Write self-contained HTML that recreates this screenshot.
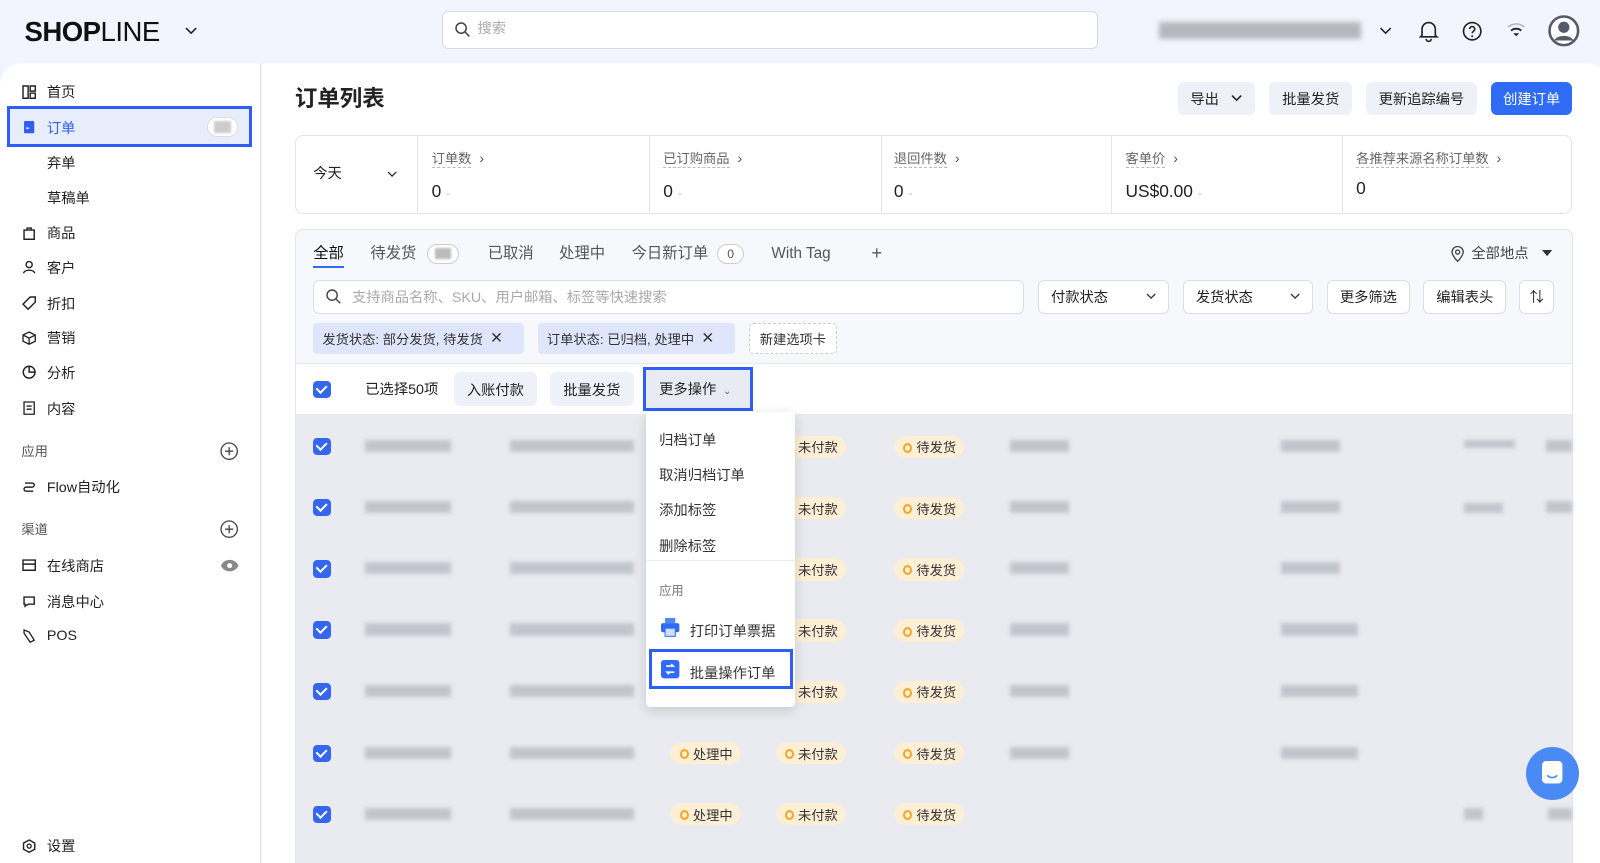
<!DOCTYPE html>
<html><head><meta charset="utf-8"><style>
*{box-sizing:border-box;margin:0;padding:0}
html,body{width:1600px;height:863px;overflow:hidden;background:#f2f5fd}
#w{position:relative;width:1568px;height:846px;zoom:1.020408;font-family:"Liberation Sans","Noto Sans CJK SC",sans-serif;color:#222;font-size:14px;background:#f2f5fd;overflow:hidden}
.a{position:absolute}
.t{position:absolute;white-space:nowrap;line-height:1}
.side{left:0;top:62px;width:256px;height:800px;background:#fff;border-right:1px solid #e6e8ef;border-top-left-radius:22px}
.main{left:257px;top:62px;width:1320px;height:800px;background:#fff;border-top-right-radius:22px}
.ni{position:absolute;left:22px;font-size:14px;color:#222;display:flex;align-items:center;gap:10px;height:20px;white-space:nowrap}
.ni svg{width:14px;height:14px}
.btn{position:absolute;top:80px;height:33px;background:#eef1f7;border-radius:6px;display:flex;align-items:center;justify-content:center;font-size:14px;color:#222;white-space:nowrap}
.card{background:#fff;border:1px solid #e1e4ec;border-radius:8px}
.lbl{font-size:13px;color:#666;border-bottom:1px dashed #bbb;padding-bottom:1px}
.sel{position:absolute;top:274px;height:34px;background:#fff;border:1px solid #d9dde6;border-radius:6px;font-size:14px;display:flex;align-items:center;padding:0 12px;justify-content:space-between;white-space:nowrap}
.tag{position:absolute;top:317px;height:30px;background:#dfe6fb;border-radius:4px;font-size:13px;color:#333;display:flex;align-items:center;padding:0 9px;white-space:nowrap}
.cb{position:absolute;left:307px;width:17px;height:17px;background:#3466f0;border-radius:4px}
.cb:after{content:"";position:absolute;left:5px;top:2px;width:5px;height:8px;border:solid #fff;border-width:0 2px 2px 0;transform:rotate(45deg)}
.bl{position:absolute;height:12px;background:#b8bbc4;filter:blur(2px);opacity:.8}
.bd{position:absolute;height:22px;background:#fcefd6;border-radius:11px;font-size:13px;color:#333;display:flex;align-items:center;padding:0 8px 0 22px;white-space:nowrap}
.bd:before{content:"";position:absolute;left:9px;top:7px;width:5px;height:6px;border:2px solid #f5a623;border-radius:50%}
.mi{position:absolute;left:646px;font-size:14px;color:#333;white-space:nowrap}
</style></head><body><div id="w">
<div class="t" style="left:24px;top:18px;font-size:27px;font-weight:bold;letter-spacing:-0.5px;color:#111">SHOP<span style="font-weight:normal">LINE</span></div>
<svg class="a" style="left:181px;top:25px" width="12" height="10" viewBox="0 0 12 10"><path d="M1 2l5 5 5-5" stroke="#222" stroke-width="1.6" fill="none"/></svg>
<div class="a" style="left:433px;top:11px;width:643px;height:37px;background:#fff;border:1px solid #d5d9e3;border-radius:6px"></div>
<svg class="a" style="left:446px;top:22px" width="15" height="15" viewBox="0 0 15 15"><circle cx="6" cy="6" r="5" stroke="#444" stroke-width="1.5" fill="none"/><path d="M10 10l4 4" stroke="#444" stroke-width="1.5"/></svg>
<div class="t" style="left:468px;top:22px;color:#aaa;font-size:14px">搜索</div>
<div class="a" style="left:1136px;top:22px;width:198px;height:16px;background:#9a9ca3;filter:blur(2.5px);opacity:.7"></div>
<svg class="a" style="left:1351px;top:25px" width="13" height="10" viewBox="0 0 12 10"><path d="M1 2l5 5 5-5" stroke="#222" stroke-width="1.5" fill="none"/></svg>
<svg class="a" style="left:1391px;top:20px" width="19" height="21" viewBox="0 0 19 21"><path d="M3 15V9a6.5 6.5 0 0113 0v6l1.5 1.5h-16z M7 18.5a2.5 2.5 0 005 0" stroke="#222" stroke-width="1.6" fill="none"/></svg>
<svg class="a" style="left:1433px;top:21px" width="20" height="20" viewBox="0 0 20 20"><circle cx="10" cy="10" r="8.5" stroke="#222" stroke-width="1.6" fill="none"/><path d="M7.5 8a2.5 2.5 0 115 0c0 2-2.5 2-2.5 4" stroke="#222" stroke-width="1.6" fill="none"/><circle cx="10" cy="15" r="1" fill="#222"/></svg>
<svg class="a" style="left:1476px;top:22px" width="20" height="16" viewBox="0 0 20 16"><path d="M2 5a12 12 0 0116 0" stroke="#bbb" stroke-width="1.8" fill="none"/><path d="M5 8.5a7.5 7.5 0 0110 0" stroke="#222" stroke-width="1.8" fill="none"/><path d="M10 14l-3-3h6z" fill="#222"/></svg>
<svg class="a" style="left:1517px;top:15px" width="31" height="31" viewBox="0 0 31 31"><circle cx="15.5" cy="15.5" r="14" stroke="#555b6a" stroke-width="2.5" fill="#fff"/><circle cx="15.5" cy="12" r="5.5" fill="#555b6a"/><path d="M6 25c3-6 16-6 19 0" fill="#555b6a"/></svg>

<div class="a side"></div>
<div class="a" style="left:7px;top:104px;width:240px;height:40px;border:3px solid #2d5ef6;background:#e8edfc"></div>
<div class="a" style="left:203px;top:115px;width:30px;height:19px;border-radius:10px;background:#fff;border:1px solid #ddd"></div>
<div class="a" style="left:210px;top:119px;width:16px;height:11px;background:#ccc;filter:blur(1px)"></div>
<div class="ni" style="top:80px"><svg viewBox="0 0 14 14"><path d="M1 1h5v12H1zM8 1h5v5H8zM8 8h5v5H8z" stroke="#222" stroke-width="1.4" fill="none"/></svg>首页</div>
<div class="ni" style="top:115px;color:#2d5ef6"><svg viewBox="0 0 14 14"><rect x="2" y="1" width="10" height="12" rx="1" fill="#2d5ef6"/><path d="M4 8h3" stroke="#fff" stroke-width="1.3"/></svg>订单</div>
<div class="ni" style="top:149px;left:46px">弃单</div>
<div class="ni" style="top:184px;left:46px">草稿单</div>
<div class="ni" style="top:218px"><svg viewBox="0 0 14 14"><path d="M2 4h10v9H2zM5 4V2h4v2" stroke="#222" stroke-width="1.4" fill="none"/></svg>商品</div>
<div class="ni" style="top:252px"><svg viewBox="0 0 14 14"><circle cx="7" cy="4.5" r="3" stroke="#222" stroke-width="1.4" fill="none"/><path d="M1.5 13c1-4 10-4 11 0" stroke="#222" stroke-width="1.4" fill="none"/></svg>客户</div>
<div class="ni" style="top:287px"><svg viewBox="0 0 14 14"><path d="M8 1h5v5l-7 7-5-5z" stroke="#222" stroke-width="1.4" fill="none"/></svg>折扣</div>
<div class="ni" style="top:321px"><svg viewBox="0 0 14 14"><path d="M7 1l6 3v6l-6 3-6-3V4zM1 4l6 3 6-3M7 7v6" stroke="#222" stroke-width="1.3" fill="none"/></svg>营销</div>
<div class="ni" style="top:355px"><svg viewBox="0 0 14 14"><circle cx="7" cy="7" r="5.8" stroke="#222" stroke-width="1.4" fill="none"/><path d="M7 1v6h6" stroke="#222" stroke-width="1.4" fill="none"/></svg>分析</div>
<div class="ni" style="top:390px"><svg viewBox="0 0 14 14"><path d="M2 1h10v12H2zM4.5 5h5M4.5 8h5" stroke="#222" stroke-width="1.3" fill="none"/></svg>内容</div>
<div class="t" style="left:21px;top:436px;font-size:13px;color:#555">应用</div>
<svg class="a" style="left:216px;top:433px" width="18" height="18" viewBox="0 0 18 18"><circle cx="9" cy="9" r="8" stroke="#444" stroke-width="1.3" fill="none"/><path d="M9 5v8M5 9h8" stroke="#444" stroke-width="1.3"/></svg>
<div class="ni" style="top:467px"><svg viewBox="0 0 14 14"><path d="M3 3h7a2 2 0 010 4H4a2 2 0 000 4h7" stroke="#222" stroke-width="1.4" fill="none"/></svg>Flow自动化</div>
<div class="t" style="left:21px;top:513px;font-size:13px;color:#555">渠道</div>
<svg class="a" style="left:216px;top:510px" width="18" height="18" viewBox="0 0 18 18"><circle cx="9" cy="9" r="8" stroke="#444" stroke-width="1.3" fill="none"/><path d="M9 5v8M5 9h8" stroke="#444" stroke-width="1.3"/></svg>
<div class="ni" style="top:544px"><svg viewBox="0 0 14 14"><path d="M1 2h12v10H1zM1 6h12" stroke="#222" stroke-width="1.4" fill="none"/></svg>在线商店</div>
<svg class="a" style="left:216px;top:548px" width="19" height="13" viewBox="0 0 19 13"><path d="M1 6.5C4-1 15-1 18 6.5 15 14 4 14 1 6.5z" fill="#888"/><circle cx="9.5" cy="6.5" r="2.5" fill="#fff"/></svg>
<div class="ni" style="top:579px"><svg viewBox="0 0 14 14"><path d="M2 3h10v7H6l-3 2v-2H2z" stroke="#222" stroke-width="1.4" fill="none"/></svg>消息中心</div>
<div class="ni" style="top:613px"><svg viewBox="0 0 14 14"><path d="M2 1l5 2 5 8-4 2-6-9z" stroke="#222" stroke-width="1.3" fill="none"/></svg>POS</div>
<div class="ni" style="top:819px"><svg viewBox="0 0 14 14"><path d="M7 1l5.5 3v6L7 13 1.5 10V4z" stroke="#222" stroke-width="1.4" fill="none"/><circle cx="7" cy="7" r="2" stroke="#222" stroke-width="1.3" fill="none"/></svg>设置</div>

<div class="a main"></div>
<div class="t" style="left:289px;top:86px;font-size:22px;font-weight:bold">订单列表</div>
<div class="btn" style="left:1154px;width:76px">导出 <svg style="margin-left:12px" width="11" height="8" viewBox="0 0 11 8"><path d="M1 1.5l4.5 4.5 4.5-4.5" stroke="#222" stroke-width="1.5" fill="none"/></svg></div>
<div class="btn" style="left:1244px;width:81px">批量发货</div>
<div class="btn" style="left:1339px;width:108px">更新追踪编号</div>
<div class="btn" style="left:1461px;width:80px;background:#2f6bf5;color:#fff">创建订单</div>

<div class="a card" style="left:289px;top:132px;width:1252px;height:78px"></div>
<div class="t" style="left:307px;top:164px">今天</div>
<svg class="a" style="left:379px;top:168px" width="10" height="7" viewBox="0 0 10 7"><path d="M1 1l4 4 4-4" stroke="#333" stroke-width="1.3" fill="none"/></svg>
<div class="a" style="left:409px;top:133px;width:1px;height:76px;background:#e4e6ec"></div>
<div class="a" style="left:636px;top:133px;width:1px;height:76px;background:#e4e6ec"></div>
<div class="a" style="left:863px;top:133px;width:1px;height:76px;background:#e4e6ec"></div>
<div class="a" style="left:1089px;top:133px;width:1px;height:76px;background:#e4e6ec"></div>
<div class="a" style="left:1315px;top:133px;width:1px;height:76px;background:#e4e6ec"></div>
<div class="t" style="left:423px;top:149px"><span class="lbl">订单数</span> <span style="color:#555">&nbsp;›</span></div>
<div class="t" style="left:423px;top:179px;font-size:17px">0 <span style="color:#bbb;font-size:12px">-</span></div>
<div class="t" style="left:650px;top:149px"><span class="lbl">已订购商品</span> <span style="color:#555">&nbsp;›</span></div>
<div class="t" style="left:650px;top:179px;font-size:17px">0 <span style="color:#bbb;font-size:12px">-</span></div>
<div class="t" style="left:876px;top:149px"><span class="lbl">退回件数</span> <span style="color:#555">&nbsp;›</span></div>
<div class="t" style="left:876px;top:179px;font-size:17px">0 <span style="color:#bbb;font-size:12px">-</span></div>
<div class="t" style="left:1103px;top:149px"><span class="lbl">客单价</span> <span style="color:#555">&nbsp;›</span></div>
<div class="t" style="left:1103px;top:179px;font-size:17px">US$0.00 <span style="color:#bbb;font-size:12px">-</span></div>
<div class="t" style="left:1329px;top:149px"><span class="lbl">各推荐来源名称订单数</span> <span style="color:#555">&nbsp;›</span></div>
<div class="t" style="left:1329px;top:176px;font-size:17px">0</div>

<div class="a" style="left:289px;top:224px;width:1253px;height:640px;background:#f7f8fc;border:1px solid #e1e4ec;border-radius:8px"></div>
<div class="t" style="left:307px;top:241px;font-size:15px;color:#111">全部</div>
<div class="a" style="left:307px;top:261px;width:30px;height:2px;background:#2f6bf5"></div>
<div class="t" style="left:363px;top:241px;font-size:15px;color:#555">待发货</div>
<div class="a" style="left:418px;top:239px;width:32px;height:20px;border:1px solid #ccc;border-radius:10px;background:#fff"></div>
<div class="a" style="left:426px;top:243px;width:16px;height:11px;background:#bbb;filter:blur(1px)"></div>
<div class="t" style="left:478px;top:241px;font-size:15px;color:#555">已取消</div>
<div class="t" style="left:548px;top:241px;font-size:15px;color:#555">处理中</div>
<div class="t" style="left:619px;top:241px;font-size:15px;color:#555">今日新订单</div>
<div class="a" style="left:703px;top:239px;width:26px;height:20px;border:1px solid #ccc;border-radius:10px;background:#fff;font-size:12px;text-align:center;line-height:18px;color:#555">0</div>
<div class="t" style="left:756px;top:241px;font-size:15px;color:#555">With Tag</div>
<div class="t" style="left:854px;top:239px;font-size:18px;color:#555">+</div>
<svg class="a" style="left:1422px;top:241px" width="13" height="16" viewBox="0 0 13 16"><path d="M6.5 15S1 9.5 1 6a5.5 5.5 0 0111 0c0 3.5-5.5 9-5.5 9z" stroke="#444" stroke-width="1.3" fill="none"/><circle cx="6.5" cy="6" r="2" stroke="#444" stroke-width="1.3" fill="none"/></svg>
<div class="t" style="left:1442px;top:242px;font-size:14px;color:#444">全部地点</div>
<svg class="a" style="left:1511px;top:245px" width="10" height="6" viewBox="0 0 10 6"><path d="M0 0h10L5 6z" fill="#333"/></svg>

<div class="sel" style="left:307px;width:697px;justify-content:flex-start"><svg width="15" height="15" viewBox="0 0 15 15"><circle cx="6" cy="6" r="5" stroke="#444" stroke-width="1.4" fill="none"/><path d="M10 10l4 4" stroke="#444" stroke-width="1.4"/></svg><span style="color:#aaa;margin-left:10px">支持商品名称、SKU、用户邮箱、标签等快速搜索</span></div>
<div class="sel" style="left:1017px;width:129px">付款状态<svg width="10" height="7" viewBox="0 0 10 7"><path d="M1 1l4 4 4-4" stroke="#333" stroke-width="1.3" fill="none"/></svg></div>
<div class="sel" style="left:1159px;width:128px">发货状态<svg width="10" height="7" viewBox="0 0 10 7"><path d="M1 1l4 4 4-4" stroke="#333" stroke-width="1.3" fill="none"/></svg></div>
<div class="sel" style="left:1300px;width:82px;justify-content:center;padding:0">更多筛选</div>
<div class="sel" style="left:1395px;width:81px;justify-content:center;padding:0">编辑表头</div>
<div class="sel" style="left:1489px;width:34px;justify-content:center;padding:0">⇅</div>

<div class="tag" style="left:307px;width:207px">发货状态: 部分发货, 待发货 <span style="margin-left:7px;font-size:15px">✕</span></div>
<div class="tag" style="left:527px;width:193px">订单状态: 已归档, 处理中 <span style="margin-left:7px;font-size:15px">✕</span></div>
<div class="tag" style="left:734px;width:86px;background:#fff;border:1px dashed #ccc;justify-content:center;padding:0">新建选项卡</div>

<div class="a" style="left:290px;top:356px;width:1251px;height:50px;background:#fff;border-top:1px solid #e6e8ee"></div>
<div class="cb" style="top:373px"></div>
<div class="t" style="left:358px;top:375px">已选择50项</div>
<div class="btn" style="left:445px;top:365px;width:81px;height:33px">入账付款</div>
<div class="btn" style="left:539px;top:365px;width:82px;height:33px">批量发货</div>
<div class="a" style="left:630px;top:360px;width:108px;height:43px;border:3px solid #2d5ef6;background:#e8ebf4"></div>
<div class="t" style="left:646px;top:375px">更多操作 <span style="font-size:10px;color:#666">&nbsp;⌄</span></div>

<div class="a" style="left:290px;top:406px;width:1251px;height:450px;background:#e9ebf0"></div>
<div class="cb" style="top:429px"></div><div class="bl" style="left:358px;top:431px;width:84px"></div><div class="bl" style="left:500px;top:431px;width:121px"></div><div class="bd" style="left:760px;top:427px">未付款</div><div class="bd" style="left:876px;top:427px">待发货</div><div class="bl" style="left:990px;top:431px;width:58px"></div><div class="bl" style="left:1255px;top:431px;width:58px"></div><div class="bl" style="left:1435px;top:431px;width:50px;height:8px"></div><div class="bl" style="left:1515px;top:431px;width:26px"></div>
<div class="cb" style="top:489px"></div><div class="bl" style="left:358px;top:491px;width:84px"></div><div class="bl" style="left:500px;top:491px;width:121px"></div><div class="bd" style="left:760px;top:487px">未付款</div><div class="bd" style="left:876px;top:487px">待发货</div><div class="bl" style="left:990px;top:491px;width:58px"></div><div class="bl" style="left:1255px;top:491px;width:58px"></div><div class="bl" style="left:1435px;top:493px;width:38px;height:10px"></div><div class="bl" style="left:1515px;top:491px;width:26px"></div>
<div class="cb" style="top:549px"></div><div class="bl" style="left:358px;top:551px;width:84px"></div><div class="bl" style="left:500px;top:551px;width:121px"></div><div class="bd" style="left:760px;top:547px">未付款</div><div class="bd" style="left:876px;top:547px">待发货</div><div class="bl" style="left:990px;top:551px;width:58px"></div><div class="bl" style="left:1255px;top:551px;width:58px"></div>
<div class="cb" style="top:609px"></div><div class="bl" style="left:358px;top:611px;width:84px"></div><div class="bl" style="left:500px;top:611px;width:121px"></div><div class="bd" style="left:760px;top:607px">未付款</div><div class="bd" style="left:876px;top:607px">待发货</div><div class="bl" style="left:990px;top:611px;width:58px"></div><div class="bl" style="left:1255px;top:611px;width:76px"></div>
<div class="cb" style="top:669px"></div><div class="bl" style="left:358px;top:671px;width:84px"></div><div class="bl" style="left:500px;top:671px;width:121px"></div><div class="bd" style="left:760px;top:667px">未付款</div><div class="bd" style="left:876px;top:667px">待发货</div><div class="bl" style="left:990px;top:671px;width:58px"></div><div class="bl" style="left:1255px;top:671px;width:76px"></div>
<div class="cb" style="top:730px"></div><div class="bl" style="left:358px;top:732px;width:84px"></div><div class="bl" style="left:500px;top:732px;width:121px"></div><div class="bd" style="left:657px;top:727px">处理中</div><div class="bd" style="left:760px;top:727px">未付款</div><div class="bd" style="left:876px;top:727px">待发货</div><div class="bl" style="left:990px;top:732px;width:58px"></div><div class="bl" style="left:1255px;top:732px;width:76px"></div>
<div class="cb" style="top:790px"></div><div class="bl" style="left:358px;top:792px;width:84px"></div><div class="bl" style="left:500px;top:792px;width:121px"></div><div class="bd" style="left:657px;top:787px">处理中</div><div class="bd" style="left:760px;top:787px">未付款</div><div class="bd" style="left:876px;top:787px">待发货</div><div class="bl" style="left:1435px;top:792px;width:18px"></div><div class="bl" style="left:1517px;top:792px;width:24px"></div>

<div class="a" style="left:633px;top:404px;width:146px;height:289px;background:#fff;border-radius:4px;box-shadow:0 3px 12px rgba(0,0,0,.15)"></div>
<div class="mi" style="top:420px">归档订单</div>
<div class="mi" style="top:455px">取消归档订单</div>
<div class="mi" style="top:489px">添加标签</div>
<div class="mi" style="top:524px">删除标签</div>
<div class="a" style="left:633px;top:549px;width:146px;height:1px;background:#eceef2"></div>
<div class="mi" style="top:569px;font-size:12px;color:#777">应用</div>
<svg class="a" style="left:648px;top:606px" width="18" height="19" viewBox="0 0 18 19"><rect x="4" y="0" width="10" height="5" fill="#4a8cf0"/><rect x="0" y="5" width="18" height="9" rx="2" fill="#2f6bf5"/><rect x="4" y="10" width="10" height="8" fill="#cfe0ff" stroke="#2f6bf5"/></svg>
<div class="mi" style="top:608px;left:676px">打印订单票据</div>
<div class="a" style="left:636px;top:636px;width:141px;height:39px;border:3px solid #2d5ef6;background:#fff"></div>
<svg class="a" style="left:648px;top:647px" width="18" height="18" viewBox="0 0 18 18"><rect width="18" height="18" rx="3" fill="#2f6bf5"/><path d="M5 6h7l-2-2M13 12H6l2 2" stroke="#fff" stroke-width="1.6" fill="none"/></svg>
<div class="mi" style="top:649px;left:676px">批量操作订单</div>

<div class="a" style="left:1495px;top:732px;width:52px;height:52px;border-radius:50%;background:#4a8af4"></div>
<svg class="a" style="left:1510px;top:745px" width="22" height="25" viewBox="0 0 22 25"><rect x="1" y="1" width="20" height="22" rx="4" fill="#fff"/><path d="M6 15c3 3 7 3 10 0" stroke="#4a8af4" stroke-width="1.6" fill="none"/></svg>
</div></body></html>
